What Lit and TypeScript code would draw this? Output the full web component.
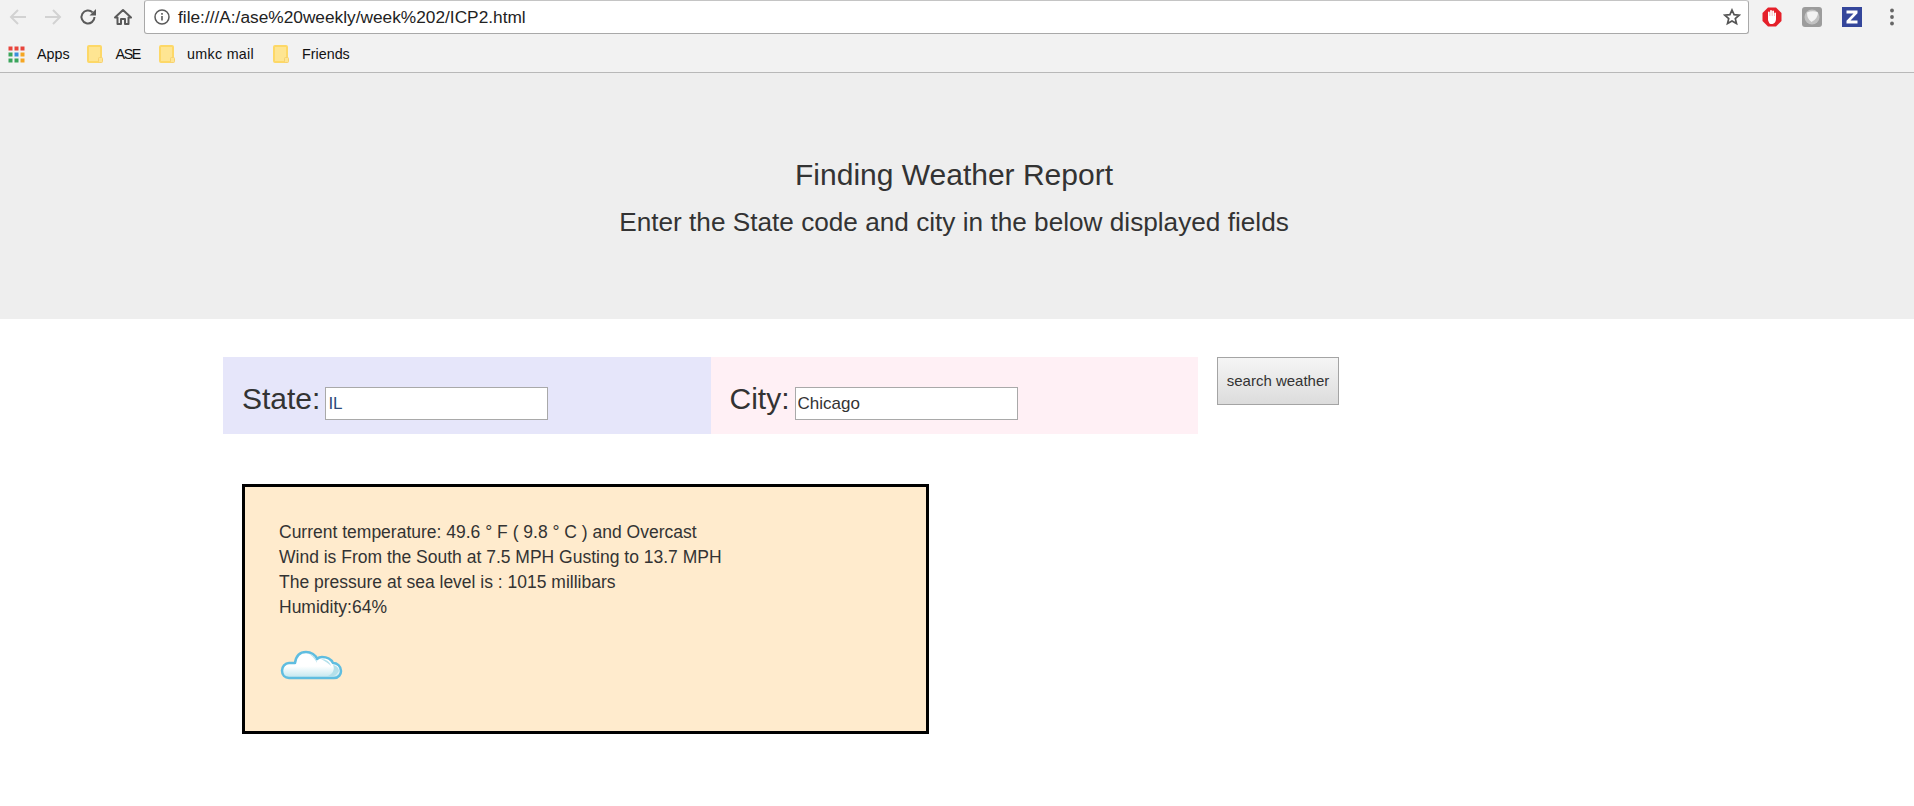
import { LitElement, html, css, svg } from "lit";
import { customElement } from "lit/decorators.js";

const folder = svg`<rect x="1" y="1" width="13" height="16" rx="1" fill="#fee592" stroke="#fdd867" stroke-width="2"/><rect x="11.500" y="12.500" width="4" height="5" rx="1" fill="#fee592" stroke="#f6d070" stroke-width="1"/>`;

@customElement("app-root")
export class AppRoot extends LitElement {
  static styles = css`
    :host { display: block; width: 1914px; height: 806px; overflow: hidden; background: #fff; color: #333; font-family: "Liberation Sans", Arial, sans-serif; }
    svg { display: block; flex: none; }
    .chrome { height: 72px; box-sizing: content-box; background: #f2f2f2; border-bottom: 1px solid #b8b8b8; display: flex; flex-direction: column; }
    .toolbar { height: 34px; display: flex; align-items: center; }
    .nav { width: 35px; height: 34px; display: flex; align-items: center; justify-content: center; flex: none; }
    .omni { flex: none; margin-left: 4px; width: 1605px; height: 34px; background: #fff; border: 1px solid #a9a9a9; border-top-color: #c4c4c4; border-radius: 3px; display: flex; align-items: center; box-sizing: border-box; padding: 0 7px 0 9px; font-size: 17.3px; color: #222; }
    .url { margin-left: 8px; flex: 1; }
    .stop { margin-left: 13px; }
    .shield { margin-left: 20px; }
    .zed { margin-left: 20px; }
    .dots { margin-left: 28px; }
    .bookmarks { height: 38px; box-sizing: border-box; padding: 2px 0 0 8px; display: flex; align-items: center; font-size: 14.3px; color: #111; }
    .gap12 { margin-left: 12px; }
    .gap13 { margin-left: 13px; }
    .gap17 { margin-left: 17px; }
    .gap19 { margin-left: 19px; }
    .narrow { letter-spacing: -1.4px; }
    .wide { letter-spacing: 0.3px; }
    .jumbo { height: 246px; background: #eee; display: flex; flex-direction: column; align-items: center; padding: 84px 6px 0 0; box-sizing: border-box; }
    h1 { margin: 0; font-size: 30px; font-weight: 400; line-height: 36px; }
    h2 { margin: 14px 0 0; font-size: 26.2px; font-weight: 400; line-height: 30px; }
    .form { display: flex; align-items: flex-start; margin: 38px 0 0 223px; }
    .field { width: 487.5px; height: 77px; display: flex; align-items: center; box-sizing: border-box; padding: 6px 0 0 19px; font-size: 30px; }
    .state { background: #e6e6fa; }
    .city { background: #fff0f5; }
    .field input { margin: 10px 0 0 5px; height: 33px; width: 223px; box-sizing: border-box; border: 1px solid #a9a9a9; background: #fff; font: 17px "Liberation Sans", Arial, sans-serif; color: #333; padding: 1px 2px; outline: none; }
    .state input { color: #2d4a7a; }
    button { margin-left: 19px; width: 122px; height: 48px; border: 1px solid #a4a4a4; background: linear-gradient(#f5f5f5, #dcdcdc); font: 15px "Liberation Sans", Arial, sans-serif; color: #333; padding: 0 0 2px; }
    .card { margin: 50px 0 0 242px; width: 687px; height: 250px; box-sizing: border-box; border: 3px solid #000; background: #ffebcd; padding: 33px 34px; font-size: 17.5px; line-height: 25px; }
    .cloud { margin: 30px 0 0 1px; }
  `;

  render() {
    return html`
      <div class="chrome">
        <div class="toolbar">
          <div class="nav"><svg width="18" height="18" viewBox="0 0 18 18" fill="none" stroke="#d2d2d2" stroke-width="2"><path d="M17 9H2.500M9 2 2 9l7 7"/></svg></div>
          <div class="nav"><svg width="18" height="18" viewBox="0 0 18 18" fill="none" stroke="#d2d2d2" stroke-width="2"><path d="M1 9h14.500M9 2l7 7-7 7"/></svg></div>
          <div class="nav"><svg width="18" height="18" viewBox="0 0 18 18" fill="none" stroke="#5a5a5a" stroke-width="2"><path d="M15.500 9a6.500 6.500 0 1 1-1.900-4.600"/><path d="M17 1v6.500h-6.500z" fill="#5a5a5a" stroke="none"/></svg></div>
          <div class="nav"><svg width="18" height="18" viewBox="0 0 18 18" fill="none" stroke="#5a5a5a" stroke-width="2"><path d="M1 9.500 9 2l8 7.500h-2.500V16h-3.500v-5H7v5H3.500V9.500z" stroke-linejoin="round"/></svg></div>
          <div class="omni">
            <svg width="16" height="16" viewBox="0 0 16 16" fill="none"><circle cx="8" cy="8" r="7" stroke="#5a5a5a" stroke-width="1.500"/><path d="M8 7v4.500M8 4v1.700" stroke="#5a5a5a" stroke-width="1.600"/></svg>
            <span class="url">file:///A:/ase%20weekly/week%202/ICP2.html</span>
            <svg width="18" height="18" viewBox="0 0 18 18" fill="none" stroke="#555" stroke-width="1.700"><path d="M9 2l2.100 4.700 5.100.5-3.900 3.400 1.200 5L9 13l-4.500 2.600 1.200-5L1.800 7.200l5.100-.5z"/></svg>
          </div>
          <svg class="stop" width="20" height="20" viewBox="0 0 20 20"><path d="M6 .5h8L19.500 6v8L14 19.500H6L.5 14V6z" fill="#e5202a"/><path d="M6 5.500a.9.9 0 0 1 1.800 0V9h.3V3.800a.9.900 0 0 1 1.800 0V9h.3V4.300a.9.900 0 0 1 1.800 0V9h.3V6a.9.900 0 0 1 1.700 0v6c0 3-2 5-4.500 5S7 15.500 6 13z" fill="#fff"/></svg>
          <svg class="shield" width="20" height="20" viewBox="0 0 20 20"><rect width="20" height="20" rx="3" fill="#9c9c9c"/><circle cx="10" cy="10" r="7.500" fill="#c2c2c2"/><path d="M5 5.500q6-2.500 11 0 0 6-6.500 9.500Q5 12 5 5.500z" fill="#f2f2f2"/></svg>
          <svg class="zed" width="20" height="20" viewBox="0 0 20 20"><rect width="20" height="20" fill="#34469b"/><path d="M4.500 3.500h11v2.700L8.500 13.500h7V16.500h-11v-2.700L11.500 6.500h-7z" fill="#fff"/></svg>
          <svg class="dots" width="4" height="18" viewBox="0 0 4 18" fill="#666"><circle cx="2" cy="2.500" r="1.900"/><circle cx="2" cy="9" r="1.900"/><circle cx="2" cy="15.500" r="1.900"/></svg>
        </div>
        <div class="bookmarks">
          <svg width="17" height="17" viewBox="0 0 17 17">
            <rect x="0.500" y="0.500" width="4" height="4" fill="#e8453c"/><rect x="6.500" y="0.500" width="4" height="4" fill="#e8453c"/><rect x="12.500" y="0.500" width="4" height="4" fill="#e8453c"/>
            <rect x="0.500" y="6.500" width="4" height="4" fill="#3ba55c"/><rect x="6.500" y="6.500" width="4" height="4" fill="#3b8fdc"/><rect x="12.500" y="6.500" width="4" height="4" fill="#f5a623"/>
            <rect x="0.500" y="12.500" width="4" height="4" fill="#3ba55c"/><rect x="6.500" y="12.500" width="4" height="4" fill="#3ba55c"/><rect x="12.500" y="12.500" width="4" height="4" fill="#f5a623"/>
          </svg>
          <span class="gap12">Apps</span>
          <svg class="gap17" width="16" height="18" viewBox="0 0 16 18">${folder}</svg>
          <span class="gap13 narrow">ASE</span>
          <svg class="gap19" width="16" height="18" viewBox="0 0 16 18">${folder}</svg>
          <span class="gap12 wide">umkc mail</span>
          <svg class="gap19" width="16" height="18" viewBox="0 0 16 18">${folder}</svg>
          <span class="gap13">Friends</span>
        </div>
      </div>
      <div class="jumbo">
        <h1>Finding Weather Report</h1>
        <h2>Enter the State code and city in the below displayed fields</h2>
      </div>
      <div class="form">
        <div class="field state">State:<input value="IL" /></div>
        <div class="field city">City:<input value="Chicago" /></div>
        <button>search weather</button>
      </div>
      <div class="card">
        Current temperature: 49.6 ° F ( 9.8 ° C ) and Overcast<br />
        Wind is From the South at 7.5 MPH Gusting to 13.7 MPH<br />
        The pressure at sea level is : 1015 millibars<br />
        Humidity:64%
        <svg class="cloud" width="63" height="30" viewBox="0 0 63 30">
          <defs>
            <linearGradient id="cl" x1="0" y1="0" x2="0" y2="1"><stop offset="0.550" stop-color="#fff"/><stop offset="1" stop-color="#bfe6ee"/></linearGradient>
          </defs>
          <path d="M9 28H54C59 28 61 24 61 21C61 16 57 13 53 13C51 9 47 7 42 7C40 7 38 8 37 9C36 5 31 2 26 2C20 2 16 6 15 13H9C5 13 2 17 2 20.500C2 25 5 28 9 28Z" fill="url(#cl)" stroke="#5fbde0" stroke-width="2.500" stroke-linejoin="round"/>
          <path d="M29 4C34 5 37 9 37 13C36 11 33 6 29 4ZM41 9C46 9 50 12 51 16C49 14 45 11 41 9ZM53 15C56 15 59 18 59 21C58 23 56 25 54 26H48C53 24 55 19 53 15Z" fill="#b4e0ea"/>
        </svg>
      </div>
    `;
  }
}
